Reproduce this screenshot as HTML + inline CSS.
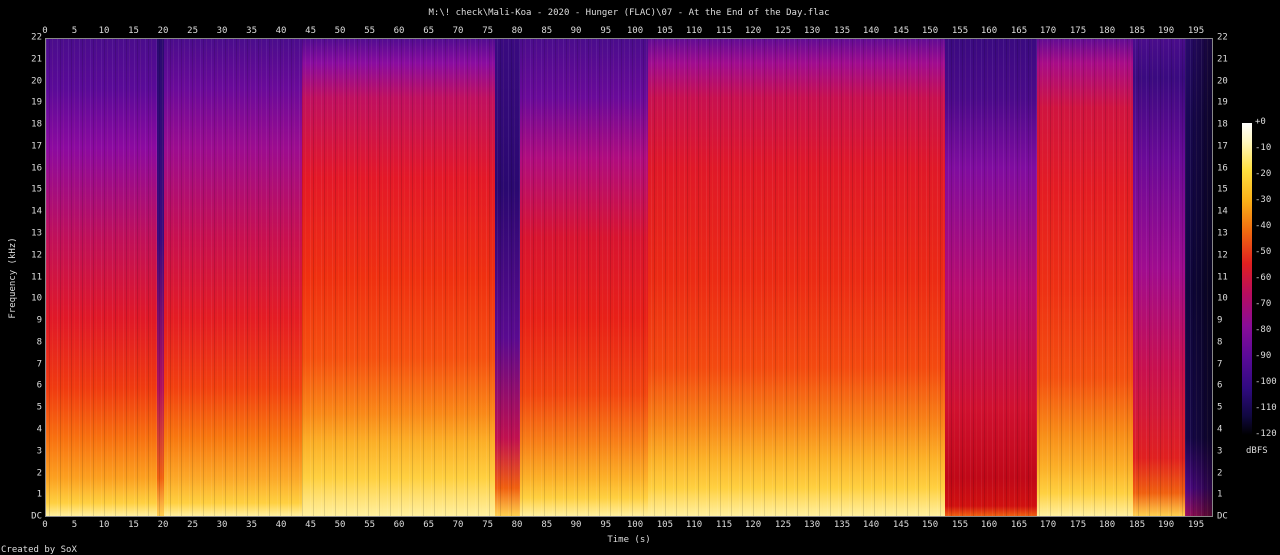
<!DOCTYPE html>
<html><head><meta charset="utf-8"><style>
body{margin:0;width:1280px;height:555px;background:#000;overflow:hidden;position:relative;font-family:"DejaVu Sans Mono","Liberation Mono",monospace;font-size:9px;color:#ddd}
.p{position:absolute;top:38px;height:479px}
.t{position:absolute;white-space:nowrap}
.xt span{position:absolute;transform:translateX(-50%)}
.yl span{position:absolute;transform:translateY(-50%);right:0}
.yr span{position:absolute;transform:translateY(-50%);left:0}
</style></head><body>
<div class="t" style="left:629px;top:8px;transform:translateX(-50%)">M:\! check\Mali-Koa - 2020 - Hunger (FLAC)\07 - At the End of the Day.flac</div>

<div class="p" style="left:45px;width:115px;background:linear-gradient(#4a0c8c 0px,#5a0a98 50px,#8c0aa0 110px,#c0105a 200px,#e01828 280px,#f03a10 350px,#f87010 400px,#fca020 440px,#ffd040 465px,#fff0a0 478px)"></div>
<div class="p" style="left:157px;width:7px;background:linear-gradient(#2a0a70 0,#3a0a80 200px,#b01060 350px,#f06010 440px,#ffd050 478px)"></div>
<div class="p" style="left:164px;width:138px;background:linear-gradient(#4a0c8c 0px,#6a0a9a 50px,#9c0c90 110px,#c81050 200px,#e41c24 280px,#f24010 350px,#f87810 400px,#fca828 440px,#ffd040 465px,#fff0a0 478px)"></div>
<div class="p" style="left:302px;width:193px;background:linear-gradient(#500c90 0px,#8a0ca0 25px,#c01060 60px,#e41828 140px,#f03010 240px,#f65010 320px,#fa8818 375px,#fcb028 405px,#ffd040 440px,#fff0a0 478px)"></div>
<div class="p" style="left:495px;width:25px;background:linear-gradient(#3a0a80 0px,#2a0870 150px,#5a0a90 300px,#c01050 400px,#f06010 450px,#ffd050 478px)"></div>
<div class="p" style="left:520px;width:128px;background:linear-gradient(#4a0c8c 0px,#6a0a9a 60px,#b00c80 120px,#d81430 200px,#e82018 280px,#f24410 355px,#f88018 405px,#fcb028 440px,#ffd040 460px,#fff0a0 478px)"></div>
<div class="p" style="left:648px;width:297px;background:linear-gradient(#600c94 0px,#a00c90 25px,#c81050 60px,#e01828 130px,#ec2a14 240px,#f44a10 330px,#f88418 385px,#fcb028 420px,#ffd040 450px,#fff0a0 478px)"></div>
<div class="p" style="left:945px;width:92px;background:linear-gradient(#3a0a80 0px,#4a0a8a 60px,#800ca0 130px,#b80c70 250px,#d01030 370px,#c00818 440px,#d01010 468px,#f06010 478px)"></div>
<div class="p" style="left:1037px;width:96px;background:linear-gradient(#600c94 0px,#a80c88 25px,#d01440 70px,#e41c24 150px,#ee3014 250px,#f45010 340px,#f88c18 395px,#fcb028 430px,#ffd040 455px,#fff0a0 478px)"></div>
<div class="p" style="left:1133px;width:52px;background:linear-gradient(#4a0c8c 0px,#3a0a80 40px,#6a0a98 120px,#a00c90 230px,#c81050 330px,#e02020 420px,#f06010 455px,#ffd050 478px)"></div>
<div class="p" style="left:1185px;width:28px;background:linear-gradient(90deg,rgba(0,0,0,0),rgba(0,0,0,.55)),linear-gradient(#2a0a70 0px,#1a0858 80px,#100640 250px,#180850 400px,#50088a 450px,#a01060 478px)"></div>
<div class="p" style="left:45px;width:1168px;background:repeating-linear-gradient(90deg,rgba(255,255,255,.07) 0 1px,transparent 1px 3px,rgba(0,0,0,.12) 3px 4px,transparent 4px 6px,rgba(255,220,120,.06) 6px 7px,transparent 7px 11px);box-sizing:border-box;border:1px solid #888"></div>

<div style="position:absolute;left:1242px;top:123px;width:10px;height:312px;background:linear-gradient(#fff 0%,#fff8c0 6%,#ffe040 15%,#fbb018 25%,#f06810 35%,#e02020 45%,#b80c60 55%,#8a0c98 65%,#5a0a98 75%,#300a80 85%,#100840 94%,#000 100%)"></div>
<div style="position:absolute;left:1255px;top:0;line-height:1">
<span class="t" style="top:118px">+0</span><span class="t" style="top:144px">-10</span><span class="t" style="top:170px">-20</span><span class="t" style="top:196px">-30</span><span class="t" style="top:222px">-40</span><span class="t" style="top:248px">-50</span><span class="t" style="top:274px">-60</span><span class="t" style="top:300px">-70</span><span class="t" style="top:326px">-80</span><span class="t" style="top:352px">-90</span><span class="t" style="top:378px">-100</span><span class="t" style="top:404px">-110</span><span class="t" style="top:430px">-120</span></div>
<div class="t" style="left:1246px;top:446px">dBFS</div>

<div class="xt" style="position:absolute;left:0;top:27px;line-height:1"><span style="left:45px">0</span><span style="left:74.5px">5</span><span style="left:104px">10</span><span style="left:133.5px">15</span><span style="left:163px">20</span><span style="left:192.6px">25</span><span style="left:222px">30</span><span style="left:251.6px">35</span><span style="left:281px">40</span><span style="left:310.6px">45</span><span style="left:340px">50</span><span style="left:369.7px">55</span><span style="left:399px">60</span><span style="left:428.7px">65</span><span style="left:458px">70</span><span style="left:487.7px">75</span><span style="left:517px">80</span><span style="left:546.8px">85</span><span style="left:576px">90</span><span style="left:605.8px">95</span><span style="left:635px">100</span><span style="left:664.9px">105</span><span style="left:694px">110</span><span style="left:724px">115</span><span style="left:753px">120</span><span style="left:783px">125</span><span style="left:812px">130</span><span style="left:842px">135</span><span style="left:871px">140</span><span style="left:901px">145</span><span style="left:930px">150</span><span style="left:960px">155</span><span style="left:989px">160</span><span style="left:1019px">165</span><span style="left:1048px">170</span><span style="left:1078px">175</span><span style="left:1107px">180</span><span style="left:1137px">185</span><span style="left:1166px">190</span><span style="left:1196px">195</span></div>
<div class="xt" style="position:absolute;left:0;top:521px;line-height:1"><span style="left:45px">0</span><span style="left:74.5px">5</span><span style="left:104px">10</span><span style="left:133.5px">15</span><span style="left:163px">20</span><span style="left:192.6px">25</span><span style="left:222px">30</span><span style="left:251.6px">35</span><span style="left:281px">40</span><span style="left:310.6px">45</span><span style="left:340px">50</span><span style="left:369.7px">55</span><span style="left:399px">60</span><span style="left:428.7px">65</span><span style="left:458px">70</span><span style="left:487.7px">75</span><span style="left:517px">80</span><span style="left:546.8px">85</span><span style="left:576px">90</span><span style="left:605.8px">95</span><span style="left:635px">100</span><span style="left:664.9px">105</span><span style="left:694px">110</span><span style="left:724px">115</span><span style="left:753px">120</span><span style="left:783px">125</span><span style="left:812px">130</span><span style="left:842px">135</span><span style="left:871px">140</span><span style="left:901px">145</span><span style="left:930px">150</span><span style="left:960px">155</span><span style="left:989px">160</span><span style="left:1019px">165</span><span style="left:1048px">170</span><span style="left:1078px">175</span><span style="left:1107px">180</span><span style="left:1137px">185</span><span style="left:1166px">190</span><span style="left:1196px">195</span></div>

<div class="yl" style="position:absolute;left:0;width:42px;top:0;line-height:1"><span style="top:517px">DC</span><span style="top:495px">1</span><span style="top:473.5px">2</span><span style="top:452px">3</span><span style="top:430px">4</span><span style="top:408px">5</span><span style="top:386px">6</span><span style="top:365px">7</span><span style="top:343px">8</span><span style="top:321px">9</span><span style="top:299px">10</span><span style="top:277.5px">11</span><span style="top:256px">12</span><span style="top:234px">13</span><span style="top:212px">14</span><span style="top:190px">15</span><span style="top:169px">16</span><span style="top:147px">17</span><span style="top:125px">18</span><span style="top:103px">19</span><span style="top:81.6px">20</span><span style="top:60px">21</span><span style="top:38px">22</span></div>
<div class="yr" style="position:absolute;left:1217px;top:0;line-height:1"><span style="top:517px">DC</span><span style="top:495px">1</span><span style="top:473.5px">2</span><span style="top:452px">3</span><span style="top:430px">4</span><span style="top:408px">5</span><span style="top:386px">6</span><span style="top:365px">7</span><span style="top:343px">8</span><span style="top:321px">9</span><span style="top:299px">10</span><span style="top:277.5px">11</span><span style="top:256px">12</span><span style="top:234px">13</span><span style="top:212px">14</span><span style="top:190px">15</span><span style="top:169px">16</span><span style="top:147px">17</span><span style="top:125px">18</span><span style="top:103px">19</span><span style="top:81.6px">20</span><span style="top:60px">21</span><span style="top:38px">22</span></div>

<div class="t" style="left:13px;top:278px;transform:translate(-50%,-50%) rotate(-90deg)">Frequency (kHz)</div>
<div class="t" style="left:629px;top:535px;transform:translateX(-50%)">Time (s)</div>
<div class="t" style="left:1px;top:545px">Created by SoX</div>
</body></html>
